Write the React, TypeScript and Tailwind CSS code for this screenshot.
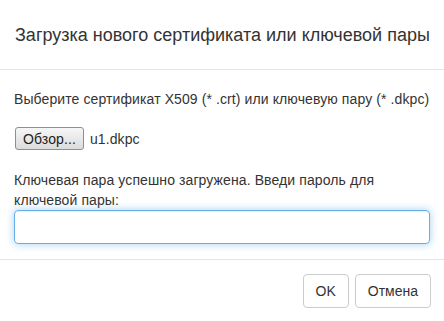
export default function App() {
  return (
    <div
      className="flex h-[321px] w-[444px] flex-col overflow-hidden bg-white text-[#333]"
      style={{ fontFamily: '"Liberation Sans", Arial, sans-serif' }}
    >
      {/* Header */}
      <div className="border-b border-[#e5e5e5] pb-[21px] pl-[15px] pr-[8px] pt-[22px]">
        <h4 className="whitespace-nowrap text-[18px] leading-[26px]">
          Загрузка нового сертификата или ключевой пары
        </h4>
      </div>

      {/* Body */}
      <div className="flex flex-col px-[14px] pb-[15px] pt-[19px] text-[14px] leading-[20px] tracking-[0.1px]">
        <p>Выберите сертификат X509 (* .crt) или ключевую пару (* .dkpc)</p>

        <div className="mt-[18px] flex items-center gap-[6px] pl-[1px]">
          <button className="h-[23px] rounded-[3px] border border-[#8f8f8f] bg-gradient-to-b from-[#f6f6f6] to-[#dcdcdc] px-[7px] text-[14px] leading-[20px] text-[#222]">
            Обзор...
          </button>
          <span>u1.dkpc</span>
        </div>

        <label className="mt-[20px]">
          Ключевая пара успешно загружена. Введи пароль для ключевой пары:
        </label>

        <input
          type="password"
          className="h-[34px] w-full rounded-[4px] border border-[#66afe9] px-3 outline-none shadow-[inset_0_1px_1px_rgba(0,0,0,0.075),0_0_8px_rgba(102,175,233,0.6)]"
        />
      </div>

      {/* Footer */}
      <div className="flex justify-end gap-[6px] border-t border-[#e5e5e5] pb-[14px] pl-[15px] pr-[13px] pt-[14px]">
        <button className="h-[34px] rounded-[4px] border border-[#ccc] bg-white px-[12px] text-[14px] text-[#333]">
          OK
        </button>
        <button className="h-[34px] rounded-[4px] border border-[#ccc] bg-white px-[12px] text-[14px] text-[#333]">
          Отмена
        </button>
      </div>
    </div>
  );
}
